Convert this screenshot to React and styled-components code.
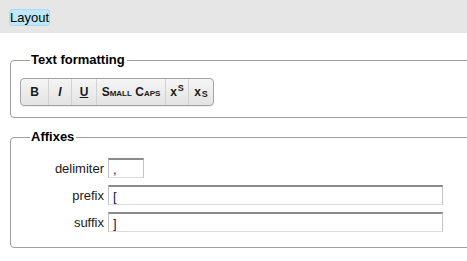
import React from 'react';
import styled, { createGlobalStyle } from 'styled-components';

const GlobalStyle = createGlobalStyle`
  html, body {
    margin: 0;
    padding: 0;
    background: #fff;
    overflow: hidden;
  }
  body {
    font-family: "Liberation Sans", Arial, Helvetica, sans-serif;
    font-size: 13px;
    color: #000;
  }
`;

const Page = styled.div`
  width: 520px;
`;

const TopBar = styled.div`
  background: #e6e6e6;
  height: 33px;
  padding: 0 9px;
  display: flex;
  align-items: center;
`;

const Tab = styled.span`
  display: inline-block;
  height: 15px;
  line-height: 15px;
  padding: 0;
  margin-top: 1px;
  background: #bfe8fb;
  border: 1px solid #a6dcf4;
  border-radius: 3px;
  font-size: 13px;
`;

const Content = styled.div`
  padding: 21px 0 0 10px;
  display: flex;
  flex-direction: column;
  gap: 13px;
`;

const Group = styled.fieldset`
  margin: 0;
  width: 490px;
  border: 1px solid #9e9e9e;
  border-radius: 4px;
  padding: ${({ $pad }) => $pad};
`;

const Legend = styled.legend`
  font-weight: bold;
  font-size: 13px;
  padding: 0 2px 0 1px;
  margin-left: 9px;
  line-height: 12px;
`;

const Toolbar = styled.div`
  display: inline-flex;
  height: 26px;
  margin-left: -1px;
  border: 1px solid #a4a4a4;
  border-radius: 4px;
  background: linear-gradient(#f5f5f5, #e3e3e3);
  box-shadow: 0 1px 1px rgba(0, 0, 0, 0.08);
  overflow: hidden;
`;

const ToolButton = styled.button`
  all: unset;
  display: flex;
  align-items: center;
  justify-content: center;
  width: ${({ $w }) => $w}px;
  height: 100%;
  font-family: "Liberation Sans", Arial, sans-serif;
  font-weight: bold;
  font-size: 12px;
  color: #1a1a1a;
  font-style: ${({ $italic }) => ($italic ? 'italic' : 'normal')};
  text-decoration: ${({ $under }) => ($under ? 'underline' : 'none')};
  font-variant: ${({ $caps }) => ($caps ? 'small-caps' : 'normal')};
  border-left: 1px solid #d2d2d2;
  box-sizing: border-box;

  &:first-child {
    border-left: none;
  }
`;

const Script = styled.span`
  font-size: 9px;
  position: relative;
  top: ${({ $up }) => ($up ? '-4px' : '2px')};
  margin-left: 1px;
`;

const Rows = styled.div`
  display: grid;
  grid-template-columns: 83px 1fr;
  row-gap: 7px;
  column-gap: 4px;
  align-items: center;
`;

const Label = styled.label`
  text-align: right;
  font-size: 13px;
  color: #1a1a1a;
`;

const Field = styled.input`
  box-sizing: border-box;
  width: ${({ $w }) => $w}px;
  height: 20px;
  padding: 2px 4px 0;
  font-family: "Liberation Sans", Arial, sans-serif;
  font-size: 13px;
  color: #10104a;
  border-style: solid;
  border-width: 1px;
  border-color: #7a7a7a #c2c2c2 #dcdcdc #c2c2c2;
  border-top-width: 2px;
  border-top-color: #8a8a8a;
  background: #fff;
  outline: none;
`;

export default function App() {
  return (
    <Page>
      <GlobalStyle />
      <TopBar>
        <Tab>Layout</Tab>
      </TopBar>
      <Content>
        <Group $pad="12px 10px 11px 10px">
          <Legend>Text formatting</Legend>
          <Toolbar>
            <ToolButton $w={27}>B</ToolButton>
            <ToolButton $w={23} $italic>I</ToolButton>
            <ToolButton $w={25} $under>U</ToolButton>
            <ToolButton $w={69} $caps>Small Caps</ToolButton>
            <ToolButton $w={23}>
              x<Script $up>S</Script>
            </ToolButton>
            <ToolButton $w={25}>
              x<Script>S</Script>
            </ToolButton>
          </Toolbar>
        </Group>
        <Group $pad="15px 10px 15px 10px">
          <Legend>Affixes</Legend>
          <Rows>
            <Label>delimiter</Label>
            <Field $w={36} defaultValue="," />
            <Label>prefix</Label>
            <Field $w={335} defaultValue="[" />
            <Label>suffix</Label>
            <Field $w={335} defaultValue="]" />
          </Rows>
        </Group>
      </Content>
    </Page>
  );
}
